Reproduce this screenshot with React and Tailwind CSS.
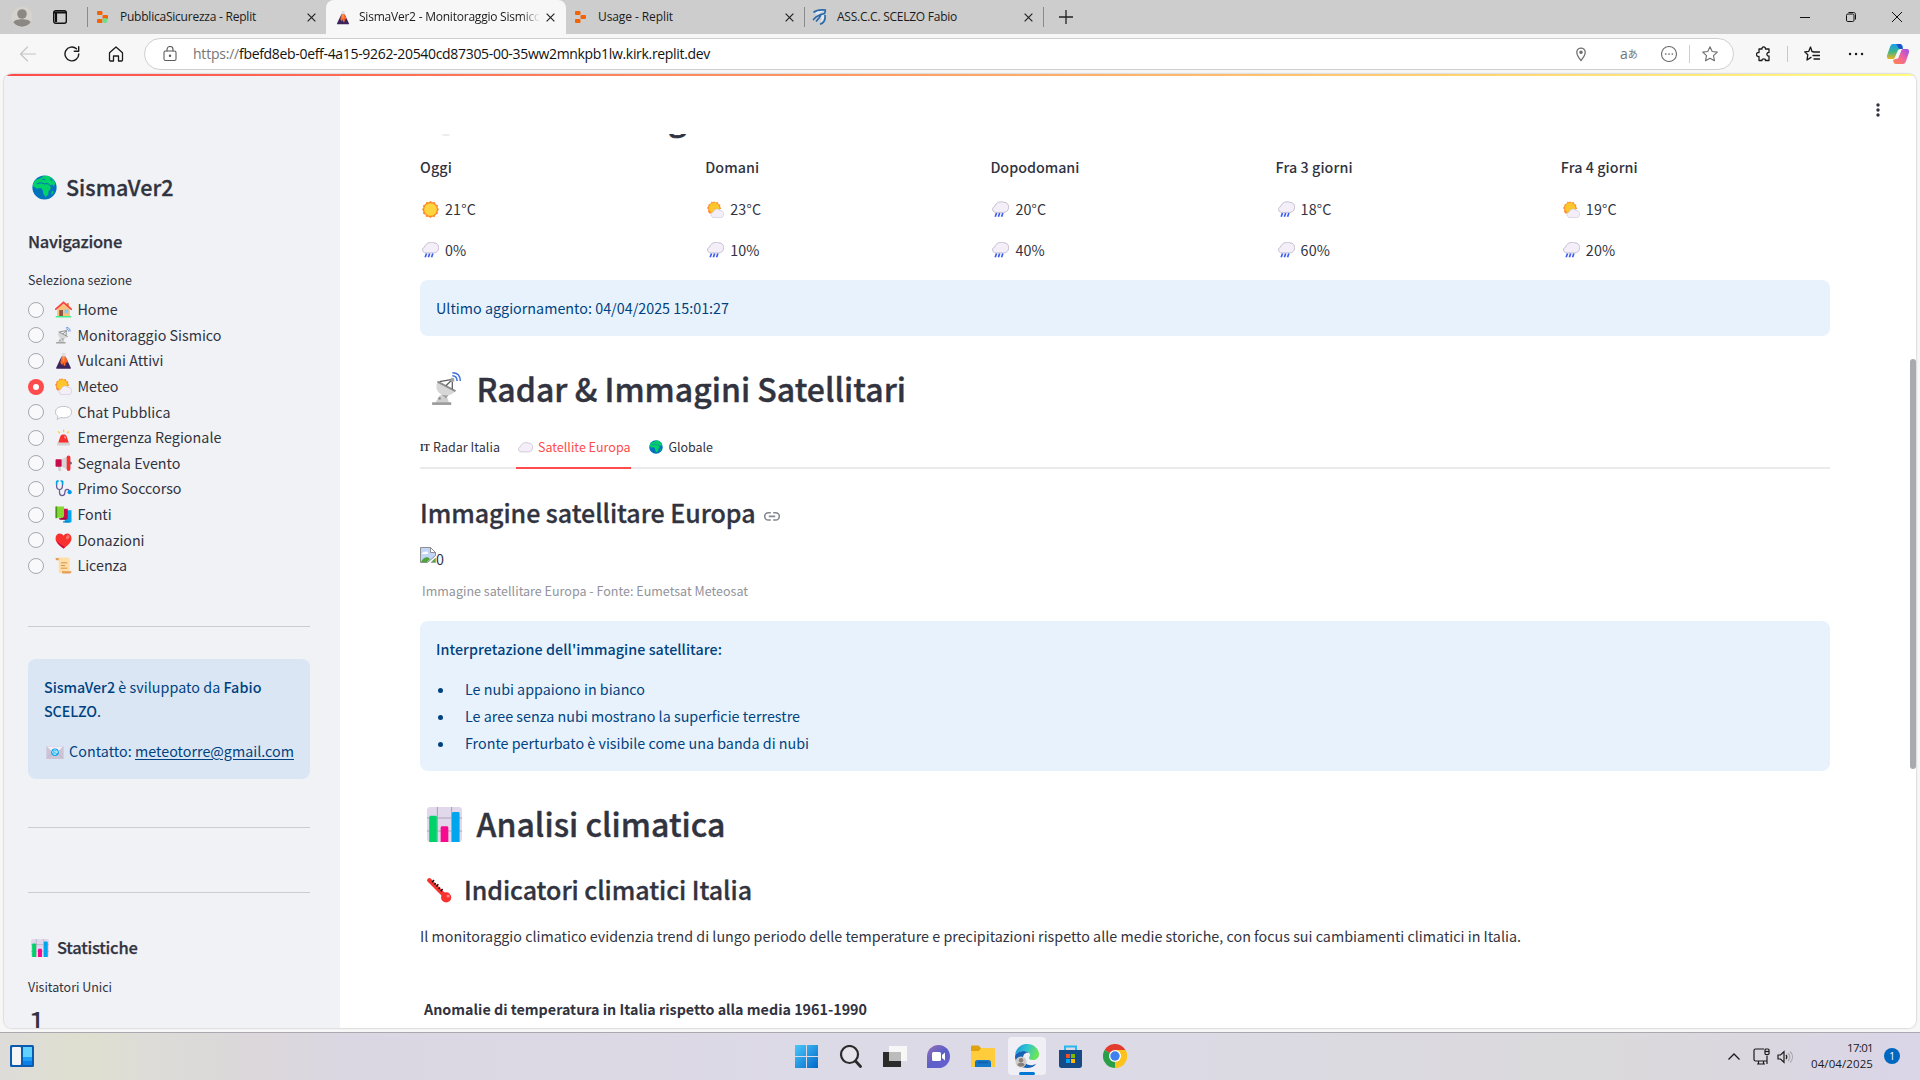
import React, { useLayoutEffect, useRef } from "react";

/* Text set to a given pixel width by spreading the difference over its letters. */
function Fit({ w, className = "", children }) {
  const ref = useRef(null);
  useLayoutEffect(() => {
    const el = ref.current;
    el.style.letterSpacing = "0px";
    const n = el.textContent.length;
    el.style.letterSpacing = (w - el.getBoundingClientRect().width) / n + "px";
  }, [w]);
  return (
    <span ref={ref} className={"inline-block whitespace-pre " + className}>
      {children}
    </span>
  );
}

const sans = "font-['Noto_Sans_CJK_SC',sans-serif]";
const segoe = "font-['Open_Sans','Noto_Sans_CJK_JP',sans-serif]";

/* ---------- emoji ---------- */
const E = ({ className, children, vb = "0 0 32 32" }) => (
  <svg viewBox={vb} className={"shrink-0 " + className}>{children}</svg>
);
const Globe = ({ className }) => (
  <E className={className}>
    <circle cx="16" cy="16" r="15.5" fill="#0074ba" />
    <path d="M5 6C3 8 1.500 11 1 14l3 2 2.500 1.500L9 16.500l3 .5 2 3v3l2 3 1 2 2-1 2-3v-3l3-4-.5-2-2.500-3 3 1 2-1 2 3 1.500-4C29 7 25 2.500 20 1l-6 .5-3 2.500-3 1z" fill="#00d26a" />
    <path d="M6 11.500l4-1.500 4 .5 2 1 3-.5 3 1M13 5.500l4 .5M23 5l3 2" stroke="#0074ba" strokeWidth="1.300" fill="none" />
    <path d="M25.500 21l2-1-1 4-2 1z" fill="#00d26a" />
  </E>
);
const House = ({ className }) => (
  <E className={className}>
    <path d="M22 4h4v8h-4z" fill="#d3883e" />
    <path d="M4 14L16 4l12 10v15H4z" fill="#f8c27c" />
    <path d="M8 17h7v12H8z" fill="#8c5543" />
    <path d="M18 16h7v7h-7z" fill="#83cbff" />
    <path d="M1.5 15.5L16 2.500l14.500 13" stroke="#f8413f" strokeWidth="3.200" fill="none" strokeLinecap="round" />
    <rect x="1" y="28" width="30" height="3" rx="1.5" fill="#44ef8e" />
  </E>
);
const Dish = ({ className }) => (
  <E className={className}>
    <path d="M5 29l4-7 6-1 3 8z" fill="#cfcfcf" />
    <path d="M10 20l3-3 5 4-3 4z" fill="#9b9b9b" />
    <path d="M7 9c-3 7 1 13 8 13 4 0 7-2 9-4z" fill="#d7d7d7" />
    <path d="M7 9l17 9" stroke="#8d8d8d" strokeWidth="1.800" />
    <path d="M9 9l12-2M21 7v9M21 7l-6 6" stroke="#5e5e5e" strokeWidth="1.200" fill="none" />
    <circle cx="21" cy="7.500" r="2" fill="#a3a3a3" />
    <path d="M21 3.500c3 0 4.500 2 4.500 5M21 .8c5 0 7.500 3 7.500 7.700" stroke="#3f72d8" strokeWidth="1.400" fill="none" />
    <path d="M2 28.500h18v2.500H2z" fill="#9b9b9b" />
    <circle cx="9" cy="25" r="1.200" fill="#888" />
  </E>
);
const Volcano = ({ className }) => (
  <E className={className}>
    <path d="M12 5c0-4 6-5 8-2 1 3-1 4-2 5h-5z" fill="#dedede" />
    <path d="M12 9h8l10 21c0 1-1 1.500-2 1.500H4c-1 0-2-.5-2-1.500z" fill="#3b245c" />
    <path d="M12 9h8l4 9-1.500 3-2-3-1 8h-3l-1-6-2 5-2-3-1.500-2z" fill="#ff6723" />
    <path d="M14 9h4l-1 9h-2z" fill="#ff9b5e" />
  </E>
);
const PartSun = ({ className }) => (
  <E className={className}>
    <path d="M13 .5l3 2.200 4-.7 1.500 3.500 3.500 1.500-.5 4 2.500 3-22 10L2 20l.5-4L0 13l2.500-3 .5-4L6.500 5l2-3.500 3 1z" fill="#ff8a2b" />
    <circle cx="13.500" cy="13" r="10" fill="#fcc62c" />
    <path d="M13.500 31.400C6.500 31.400 5.500 21.500 12 20.500 13.500 14.500 21.500 13.500 24 17.500c5 0 7.600 3.500 7.600 6.800 0 3.600-2.500 7.100-6.100 7.100z" fill="#f3eef8" stroke="#cdc4d6" strokeWidth="1.200" />
  </E>
);
const Bubble = ({ className }) => (
  <E className={className}>
    <path d="M16 4.500c9 0 15.300 4.500 15.300 10.800S25 26 16 26c-2 0-3.500-.2-5-.6L4 29l1.500-6C2.500 21 .7 18.500 .7 15.300 .7 9.300 7 4.500 16 4.500z" fill="#fff" stroke="#b5b1ba" strokeWidth="1.500" />
  </E>
);
const Siren = ({ className }) => (
  <E className={className}>
    <path d="M15 1h2.400v5H15zM5 5l2-1.400 3 4-2 1.400zM27 5l-2-1.400-3 4 2 1.400z" fill="#ffce3a" />
    <path d="M10 14c1-5 11-5 12 0l4 12H6z" fill="#f8312f" />
    <path d="M18 12l3 4-1 3-3-3z" fill="#ff9aa0" />
    <rect x="4" y="26" width="24" height="5" rx="1.500" fill="#d3d3d3" />
  </E>
);
const Mega = ({ className }) => (
  <E className={className}>
    <path d="M5 20h5l2 10H7z" fill="#d0d0d0" />
    <path d="M12 8l11-5v24l-11-5z" fill="#d8d5da" />
    <rect x="1" y="8" width="11.500" height="14" rx="1.500" fill="#ca0b4a" />
    <rect x="22" y="1" width="7" height="29" rx="3.500" fill="#f8312f" />
    <path d="M29 12c3 0 3 6 0 6z" fill="#321b41" />
  </E>
);
const Steth = ({ className }) => (
  <E className={className}>
    <path d="M5 3H3v8c0 4 2 7 5.500 7S14 15 14 11V3h-2M8.500 18v6c0 7 10 7 10 0 0-9 9-8 9-1" stroke="#6d5a99" strokeWidth="2.400" fill="none" />
    <path d="M3 2h4M10.500 2h4M14.500 2v7M3 2v7" stroke="#00a6ed" strokeWidth="2.600" fill="none" />
    <circle cx="27.500" cy="23" r="4" fill="#0098ee" />
  </E>
);
const Books = ({ className }) => (
  <E className={className}>
    <path d="M20 8h11v20c0 2-1 3-2 3H18z" fill="#00a6ed" />
    <path d="M15 29h12v2H15z" fill="#0074ba" />
    <path d="M13 5h11v20H11z" fill="#ca0b4a" />
    <path d="M7 23h14v3H9z" fill="#990838" />
    <path d="M1 1h16v18l-2 3H1z" fill="#86d72f" />
    <path d="M1 1h3v22H1z" fill="#44911b" />
  </E>
);
const Heart = ({ className }) => (
  <E className={className}>
    <path d="M16 7C12 .5 1 1.500 1 12c0 9 10 15 15 19 5-4 15-10 15-19C31 1.500 20 .5 16 7z" fill="#f8312f" />
    <path d="M3 17c3 7 9 10.500 13 14l3-2.500C12 25 6 20 3 17z" fill="#ca0b4a" />
    <ellipse cx="24" cy="9.500" rx="3" ry="4.300" transform="rotate(35 24 9.500)" fill="#f37366" />
  </E>
);
const Scroll = ({ className }) => (
  <E className={className}>
    <path d="M5 1h19c2 0 3.500 1.500 3.500 3.500V27c0 2-1 3-3 3H9c-2 0-2-1-2-3V6z" fill="#ffdea7" />
    <path d="M1 2h6v4H3C1.500 6 1 4 1 2zM13 27h18c0 3-1.500 4-4 4H15c-2 0-2-2-2-4z" fill="#e39d55" />
    <path d="M11 11h12M11 16h8M11 21h12" stroke="#d3883e" strokeWidth="1.700" />
  </E>
);
const Mail = ({ className }) => (
  <E className={className} vb="0 0 32 24">
    <rect x="0" y="0" width="32" height="24" rx="1.500" fill="#cdc4d6" />
    <path d="M1 1h30L16 15z" fill="#f3eef8" />
    <path d="M1 23l11-11M31 23L20 12" stroke="#b4a8c3" />
    <circle cx="16" cy="11.500" r="7" fill="#00a6ed" />
    <circle cx="16" cy="11.500" r="2.200" fill="none" stroke="#fff" strokeWidth="1.300" />
    <path d="M18.300 9v3c0 2 2 2 2.200-.5.2-6-9-6-9 0 0 4 4 5.500 7 3.500" fill="none" stroke="#fff" strokeWidth="1.200" />
  </E>
);
const Chart = ({ className }) => (
  <E className={className}>
    <rect x="0" y="0" width="32" height="32" rx="3" fill="#e1d8ec" />
    <path d="M9.500 0v32M22.500 0v32M0 10h32M0 22h32" stroke="#aba3b5" strokeWidth="1" />
    <path d="M2 9.500C2 8.500 2.500 8 3.500 8h4C8.500 8 9 8.500 9 9.500V32H2z" fill="#00d26a" />
    <path d="M12.500 19c0-1 .5-1.500 1.500-1.500h4c1 0 1.500.5 1.500 1.500v13h-7z" fill="#f70a8d" />
    <path d="M22.800 6c0-1 .5-1.500 1.500-1.500h4c1 0 1.500.5 1.500 1.500v26h-7z" fill="#00a6ed" />
  </E>
);
const Thermo = ({ className }) => (
  <E className={className}>
    <path d="M3 3l19 19" stroke="#f8312f" strokeWidth="5.500" strokeLinecap="round" />
    <circle cx="24.500" cy="24.800" r="6.500" fill="#f8312f" />
    <circle cx="27" cy="23" r="2" fill="#ff8687" />
    <path d="M6.500 5.500l2.500-3M12 11l2.500-3M17.500 17l2.500-3M9.500 8.500l1.500-2M15 14l1.500-2" stroke="#111" strokeWidth="1.900" />
  </E>
);
const Sun = ({ className }) => (
  <E className={className}>
    <path d="M16 0l3.500 2.500L24 2l1.500 4L30 8l-.5 4.500L32 16l-2.500 3.500L30 24l-4.500 2-1.500 4-4.500-.5L16 32l-3.500-2.500L8 30l-1.500-4L2 24l.5-4.500L0 16l2.500-3.500L2 8l4.500-2L8 2l4.500.5z" fill="#ff8a2b" />
    <circle cx="16" cy="16" r="11.800" fill="#fcd53f" />
  </E>
);
const cloudPath = "M8 20.500C-.5 20.500-1 11 5 9.500 6.500 2 17-1.500 22.500 1.500c6 0 8.800 4 8.800 9 0 6-3.800 10-9.300 10z";
const Rain = ({ className }) => (
  <E className={className} vb="0 0 32 30">
    <path d={cloudPath} fill="#f3eef8" stroke="#bdb4c8" strokeWidth="1.500" />
    <path d="M8.500 21.500l-2.500 7M14.500 21.500l-2.500 7M20.500 21.500l-2.500 7" stroke="#3f5ff0" strokeWidth="3.200" />
  </E>
);
const Cloud = ({ className }) => (
  <E className={className} vb="0 0 32 22">
    <path d={cloudPath} fill="#f3eef8" stroke="#c3bacd" strokeWidth="1.500" />
  </E>
);

/* ---------- browser ---------- */
const Replit = ({ green }) => (
  <E className="h-[12px] w-[11px]" vb="0 0 11 12">
    <rect x="0" y="0" width="5.500" height="4" rx="1" fill="#f26207" />
    <rect x="5.500" y="4" width="5.500" height="4" rx="1" fill="#f26207" />
    <rect x="0" y="8" width="5.500" height="4" rx="1" fill="#f26207" />
    {green && <circle cx="8" cy="9.500" r="2.500" fill="#6ee08c" />}
  </E>
);
const Close = ({ className = "" }) => (
  <svg viewBox="0 0 10 10" className={"h-[9px] w-[9px] shrink-0 " + className}>
    <path d="M.7.7l8.600 8.600M9.300.7L.7 9.300" stroke="#222" strokeWidth="1.300" />
  </svg>
);
const Ico = ({ className = "", c = "#1b1b1b", children }) => (
  <svg viewBox="0 0 16 16" className={"h-4 w-4 shrink-0 " + className} fill="none" stroke={c} strokeWidth="1.100" strokeLinecap="round" strokeLinejoin="round">
    {children}
  </svg>
);

function TabBar() {
  return (
    <div className={"flex h-[34px] items-center bg-[#cdcdcd] text-[12px] text-[#1b1b1b] " + segoe}>
      <svg viewBox="0 0 22 22" className="ml-[11px] h-[22px] w-[22px]">
        <circle cx="11" cy="11" r="10.500" fill="#d6d2cd" />
        <circle cx="11" cy="8" r="4.800" fill="#8b8783" />
        <path d="M2.500 16.500c0-4.500 17-4.500 17 0-4 5.500-13 5.500-17 0z" fill="#8b8783" />
      </svg>
      <svg viewBox="0 0 14 14" className="ml-[20px] h-[14px] w-[14px]">
        <rect x=".7" y=".7" width="12.600" height="12.600" rx="2" fill="none" stroke="#111" strokeWidth="1.400" />
        <path d="M1 2.500h12M3 2v10" stroke="#111" strokeWidth="2.200" />
      </svg>
      <div className="ml-[20px] h-5 w-px bg-[#8a8a8a]" />
      <div className="ml-[9px] flex w-[229px] items-center">
        <Replit green />
        <Fit w={136} className="ml-[12px]">PubblicaSicurezza - Replit</Fit>
        <Close className="ml-[51px]" />
      </div>
      <div className="flex h-[34px] w-[240px] items-center rounded-t-[8px] bg-[#f7f7f7]">
        <Volcano className="ml-[10px] h-[15px] w-[14px]" />
        <div className="ml-[9px] w-[180px] [mask-image:linear-gradient(to_right,black_162px,transparent_181px)]">
          <Fit w={182}>SismaVer2 - Monitoraggio Sismico</Fit>
        </div>
        <Close className="ml-[7px]" />
      </div>
      <div className="flex w-[238px] items-center">
        <div className="ml-[9px]"><Replit /></div>
        <Fit w={75} className="ml-[12px]">Usage - Replit</Fit>
        <Close className="ml-[112px]" />
      </div>
      <div className="h-5 w-px bg-[#8a8a8a]" />
      <div className="flex w-[238px] items-center">
        <svg viewBox="0 0 15 16" className="ml-[7px] h-4 w-[15px]">
          <path d="M1 4C4 0 10 0 14 1L8 4l5 3-2 7-3 2 2-7-5-1-4 3 4-6z" fill="#dfe7ef" />
          <path d="M1.500 3.500C5 .5 10 .6 14 1.200M13.500 1.500l-1 3-4 1L4 8 1 11M13 6c.5 4-1 8-5 9.200M9 6L7 9l-3 3.500" stroke="#2d68a8" strokeWidth="1.700" fill="none" />
        </svg>
        <Fit w={120} className="ml-[10px]">ASS.C.C. SCELZO Fabio</Fit>
        <Close className="ml-[67px]" />
      </div>
      <div className="h-5 w-px bg-[#8a8a8a]" />
      <svg viewBox="0 0 14 14" className="ml-[15px] h-[14px] w-[14px]"><path d="M7 0v14M0 7h14" stroke="#222" strokeWidth="1.300" /></svg>
      <div className="ml-auto flex items-center gap-[36px] pr-[18px]">
        <svg viewBox="0 0 10 10" className="h-[10px] w-[10px]"><path d="M0 5.500h10" stroke="#111" /></svg>
        <svg viewBox="0 0 10 10" className="h-[10px] w-[10px]"><rect x=".5" y="2" width="7.500" height="7.500" rx="1.300" fill="none" stroke="#111" /><path d="M2.500.5h5c1.300 0 2 .7 2 2v5" fill="none" stroke="#111" /></svg>
        <svg viewBox="0 0 10 10" className="h-[10px] w-[10px]"><path d="M0 0l10 10M10 0L0 10" stroke="#111" /></svg>
      </div>
    </div>
  );
}

function Toolbar() {
  return (
    <div className={"flex h-[40px] items-center bg-[#f7f7f7] pb-px text-[14px] " + segoe}>
      <Ico c="#c4c4c4" className="ml-[20px]"><path d="M.5 8h15M7.500 1L.5 8l7 7" /></Ico>
      <Ico className="ml-[28px]"><path d="M14.800 8A6.900 6.900 0 1 1 12.500 2.800M14.700.8v4.400h-4.400" strokeWidth="1.400" /></Ico>
      <Ico className="ml-[28px]"><path d="M1.500 6.800L8 1l6.500 5.800V14c0 .7-.3 1-1 1h-3v-5h-5v5h-3c-.7 0-1-.3-1-1z" strokeWidth="1.300" /></Ico>
      <div className="ml-[20px] flex h-[32px] w-[1590px] items-center rounded-full border border-[#cfcfcf] bg-white">
        <Ico c="#5c5c5c" className="ml-[17px]"><rect x="2" y="5" width="12" height="9.500" rx="1.500" /><path d="M5 5V3.500a3 3 0 0 1 6 0V5" /><circle cx="8" cy="9.700" r=".7" fill="#5c5c5c" /></Ico>
        <Fit w={46} className="ml-[15px] text-[#767676]">https://</Fit>
        <Fit w={471} className="text-[#111]">fbefd8eb-0eff-4a15-9262-20540cd87305-00-35ww2mnkpb1lw.kirk.replit.dev</Fit>
        <div className="ml-auto flex items-center">
          <Ico c="#707070"><path d="M8 14.500C5 11 3.800 9 3.800 6.300a4.200 4.200 0 0 1 8.400 0C12.200 9 11 11 8 14.500z" strokeWidth="1.300" /><circle cx="8" cy="6.300" r="1.200" fill="#707070" /></Ico>
          <span className="ml-[31px] flex w-[19px] items-center text-[#757575]"><span className="text-[14px] leading-none">a</span><span className="text-[10px] leading-none">あ</span></span>
          <Ico c="#707070" className="ml-[22px]"><circle cx="8" cy="8" r="7.500" /><path d="M4.700 8h.1M8 8h.1M11.300 8h.1" strokeWidth="1.700" /></Ico>
          <div className="ml-[12px] h-[18px] w-px bg-[#cfcfcf]" />
          <Ico c="#707070" className="ml-[12px] mr-[15px]"><path d="M8 .8l2.200 4.700 5.100.6-3.800 3.500 1 5.200L8 12.200l-4.500 2.600 1-5.200L.7 6.100l5.100-.6z" /></Ico>
        </div>
      </div>
      <Ico className="ml-[22px]"><path d="M3 3h3c-.6-2.800 4-2.800 3.400 0H13v3.500c-2.800-.4-2.800 4 0 3.500V14.500H9.400c.6-2.300-3.800-2.300-3.400 0H3V10.500c-3.400.6-3.400-4.500 0-4z" strokeWidth="1.300" /></Ico>
      <div className="ml-[15px] h-[16px] w-px bg-[#c9c9c9]" />
      <Ico className="ml-[16px]"><path d="M10 6L8 5.500 6.500 1 4.800 5.300.7 5.800l3.100 3L3 14l4-2.600M10 6h5.500M9 9.500h6.500M10 13h5.500" strokeWidth="1.300" /></Ico>
      <Ico className="ml-[28px]"><path d="M2 8h.1M8 8h.1M14 8h.1" strokeWidth="2.400" /></Ico>
      <svg viewBox="0 0 22 20" className="ml-[23px] h-[20px] w-[22px]">
        <defs>
          <linearGradient id="cpA" x1="0" y1="0" x2="0" y2="1"><stop offset="0" stopColor="#18a0ef" /><stop offset=".5" stopColor="#3bb48c" /><stop offset="1" stopColor="#f0b41c" /></linearGradient>
          <linearGradient id="cpB" x1="1" y1="0" x2="0" y2="1"><stop offset="0" stopColor="#9b4cf0" /><stop offset=".5" stopColor="#f2649a" /><stop offset="1" stopColor="#ff8a4a" /></linearGradient>
        </defs>
        <path d="M6 0h7c2 0 2.500 1.500 3 3.500L11 6l-3 7c-.5 1.500-1 2-3 2H2C0 15-.3 13 .2 11L3 3C3.700 1 4.500 0 6 0z" fill="url(#cpA)" />
        <path d="M12 0c3 0 3 2 4 5h-3c-2 0-2-4-4-5z" fill="#1e50d0" />
        <path d="M16 20H9c-2 0-2.500-1.500-3-4l5-2 3-7c.5-1.500 1-2 3-2h3c2 0 2.300 2 1.800 4L19 17c-.7 2-1.500 3-3 3z" fill="url(#cpB)" />
        <path d="M12.500 5.500h2L11 14.500H8.500z" fill="#f7f7f7" />
      </svg>
    </div>
  );
}

/* ---------- sidebar ---------- */
const nav = [
  [House, "Home", 40], [Dish, "Monitoraggio Sismico", 144], [Volcano, "Vulcani Attivi", 86], [PartSun, "Meteo", 41],
  [Bubble, "Chat Pubblica", 93], [Siren, "Emergenza Regionale", 144], [Mega, "Segnala Evento", 103],
  [Steth, "Primo Soccorso", 104], [Books, "Fonti", 34], [Heart, "Donazioni", 67], [Scroll, "Licenza", 49.5],
];

function Sidebar() {
  return (
    <aside className="flex w-[336px] shrink-0 flex-col overflow-hidden bg-[#f0f2f6] pl-[24px]">
      <div className="mt-[91px] flex h-[40px] items-center">
        <Globe className="ml-[4px] mt-px h-[25px] w-[25px]" />
        <Fit w={107.500} className="ml-[9px] text-[21.500px] font-medium leading-[40px] [-webkit-text-stroke:0.3px]">SismaVer2</Fit>
      </div>
      <Fit w={94} className="mt-[18px] self-start text-[16.500px] font-medium leading-[32px] [-webkit-text-stroke:0.25px]">Navigazione</Fit>
      <Fit w={104} className="mt-[13px] self-start text-[12.500px] leading-[20px]">Seleziona sezione</Fit>
      <ul className="mt-[7px]">
        {nav.map(([Icon, label, w]) => (
          <li key={label} className="flex h-[25.600px] items-center">
            {label === "Meteo" ? (
              <span className="flex h-4 w-4 items-center justify-center rounded-full bg-[#ff4b4b]"><span className="h-[6px] w-[6px] rounded-full bg-white" /></span>
            ) : (
              <span className="h-4 w-4 rounded-full border border-[#a6a8b0] bg-[#f9f9fb]" />
            )}
            <Icon className="ml-[10.500px] h-[17px] w-[17px]" />
            <Fit w={w} className="ml-[6px] -mt-px text-[14.300px] leading-[24px]">{label}</Fit>
          </li>
        ))}
      </ul>
      <div className="mt-[47px] h-px w-[282px] shrink-0 bg-[#cbccd2]" />
      <div className="mt-[32px] h-[120px] w-[282px] shrink-0 rounded-[8px] bg-[#dae6f4] pl-[16px] pt-[16px] text-[14.300px] leading-[24px] text-[#004280]">
        <div className="flex"><Fit w={71} className="font-medium">SismaVer2</Fit><Fit w={108.500}>{" è sviluppato da "}</Fit><Fit w={38} className="font-medium">Fabio</Fit></div>
        <div className="flex"><Fit w={53} className="font-medium">SCELZO</Fit>.</div>
        <div className="mt-[16px] flex items-center">
          <Mail className="ml-[2px] mt-[3px] h-[13px] w-[18px]" />
          <Fit w={66} className="ml-[5px]">{"Contatto: "}</Fit>
          <Fit w={159} className="underline underline-offset-2">meteotorre@gmail.com</Fit>
        </div>
      </div>
      <div className="mt-[48px] h-px w-[282px] shrink-0 bg-[#cbccd2]" />
      <div className="mt-[64px] h-px w-[282px] shrink-0 bg-[#cbccd2]" />
      <div className="mt-[38px] flex h-[32px] shrink-0 items-center">
        <Chart className="ml-[3px] mt-[3px] h-[18px] w-[18px]" />
        <Fit w={80.500} className="ml-[8px] text-[16.500px] font-medium leading-[32px] [-webkit-text-stroke:0.25px]">Statistiche</Fit>
      </div>
      <Fit w={84} className="mt-[14px] self-start text-[12.500px] leading-[20px]">Visitatori Unici</Fit>
      <span className="mt-[3px] text-[32px] leading-[42px]">1</span>
    </aside>
  );
}

/* ---------- main ---------- */
const days = [
  ["Oggi", 32, Sun, "21°C", "0%"], ["Domani", 54, PartSun, "23°C", "10%"], ["Dopodomani", 89, Rain, "20°C", "40%"],
  ["Fra 3 giorni", 77, Rain, "18°C", "60%"], ["Fra 4 giorni", 77, PartSun, "19°C", "20%"],
];

function Main() {
  return (
    <main className="flex min-w-0 flex-1 flex-col overflow-hidden bg-white">
      <div className="flex h-[58px] shrink-0 justify-end">
        <svg viewBox="0 0 4 14" className="mr-[30px] mt-[27px] h-[14px] w-[4px]" fill="#31333f"><circle cx="2" cy="2" r="1.700" /><circle cx="2" cy="7" r="1.700" /><circle cx="2" cy="12" r="1.700" /></svg>
      </div>
      <div className="flex w-[1490px] flex-col pl-[80px]">
        <div className="flex h-[21px] items-start overflow-hidden">
          <div className="ml-[22px] h-[2px] w-[8px] rounded-b-full bg-[#ececef]" />
          <div className="relative ml-[218px] h-full w-[20px] overflow-hidden">
            <span className="absolute -top-[35px] left-0 text-[32px] font-medium leading-[36px] [-webkit-text-stroke:0.7px]">g</span>
          </div>
        </div>
        <div className="grid grid-cols-5 gap-x-4 text-[14.300px] leading-[24px]">
          {days.map(([d, w, Icon, t, p]) => (
            <div key={d} className="h-[125px]">
              <Fit w={w} className="block w-fit font-medium">{d}</Fit>
              <div className="mt-[18px] flex items-center">
                <Icon className="ml-[2px] h-[17px] w-[17px]" /><Fit w={31} className="ml-[6px]">{t}</Fit>
              </div>
              <div className="mt-[17px] flex items-center">
                <Rain className="ml-[2px] h-[16px] w-[17px]" /><Fit w={p === "0%" ? 21 : 29.500} className="ml-[6px]">{p}</Fit>
              </div>
            </div>
          ))}
        </div>
        <div className="h-[56px] rounded-[8px] bg-[#e8f2fc] pl-[16px] text-[14.300px] leading-[56px] text-[#004280]">
          <Fit w={293}>Ultimo aggiornamento: 04/04/2025 15:01:27</Fit>
        </div>
        <h2 className="mt-[28px] flex h-[48px] items-center">
          <Dish className="ml-[10px] mt-[2px] h-[38px] w-[34px]" />
          <Fit w={429.500} className="ml-[12.500px] text-[32px] font-medium leading-[48px] [-webkit-text-stroke:0.4px]">Radar &amp; Immagini Satellitari</Fit>
        </h2>
        <div className="mt-[15px] flex h-[42px] gap-4 border-b-2 border-[#eaeaec] text-[12.500px] leading-[40px]">
          <div className="flex h-[40px] w-[80px] items-center"><Fit w={10} className="mt-px font-['Noto_Serif','Liberation_Serif',serif] text-[9px] font-bold">IT</Fit><Fit w={67} className="ml-[3px]">Radar Italia</Fit></div>
          <div className="flex h-[42px] w-[115px] items-center border-b-2 border-[#ff4b4b] text-[#ff4b4b]"><Cloud className="ml-[2px] h-[11px] w-[15px]" /><Fit w={92.500} className="ml-[5px]">Satellite Europa</Fit></div>
          <div className="flex h-[40px] items-center"><Globe className="ml-[2px] h-[14px] w-[14px]" /><Fit w={44.500} className="ml-[5.500px]">Globale</Fit></div>
        </div>
        <h3 className="mt-[23px] flex h-[40px] items-center">
          <Fit w={335.500} className="text-[25px] font-medium leading-[40px] [-webkit-text-stroke:0.3px]">Immagine satellitare Europa</Fit>
          <svg viewBox="0 0 16 9" className="ml-[8.500px] mt-[8px] h-[9px] w-[16px]" fill="none" stroke="#85868f" strokeWidth="1.600"><path d="M6.800.8H4.300a3.600 3.600 0 0 0 0 7.200h2.500M9.200.8h2.500a3.600 3.600 0 0 1 0 7.200H9.200M4.800 4.400h6.400" /></svg>
        </h3>
        <div className="mt-[15px] flex h-[24px] items-start">
          <svg viewBox="0 0 16 16" className="h-4 w-4">
            <path d="M.5.500h10l5 5v3l-8 7h-7z" fill="#c3d6f7" stroke="#8f8f8f" />
            <path d="M10.500.5v5h5z" fill="#fff" stroke="#8f8f8f" />
            <path d="M2 7c0-1.500 1.500-2 2.500-1.500C5 4 8 4 8 6.500v.5z" fill="#fff" />
            <path d="M1 15c2-5 7-6 9-3l-3 3z" fill="#4da63c" />
            <path d="M15.500 11v4.500H11z" fill="#4da63c" stroke="#8f8f8f" strokeWidth=".5" />
          </svg>
          <span className="text-[14.300px] leading-[24px]">0</span>
        </div>
        <Fit w={326} className="ml-[2px] mt-[10px] self-start text-[12.500px] leading-[19px] text-[#92939b]">Immagine satellitare Europa - Fonte: Eumetsat Meteosat</Fit>
        <div className="mt-[21px] h-[150px] rounded-[8px] bg-[#e8f2fc] pl-[16px] pt-[16px] text-[14.300px] leading-[24px] text-[#004280]">
          <Fit w={286} className="block w-fit font-medium">Interpretazione dell'immagine satellitare:</Fit>
          <ul className="mt-[14px] flex flex-col">
            {[["Le nubi appaiono in bianco", 180], ["Le aree senza nubi mostrano la superficie terrestre", 335], ["Fronte perturbato è visibile come una banda di nubi", 344]].map(([t, w]) => (
              <li key={t} className="flex h-[27px] items-center">
                <span className="ml-[2px] mt-[3px] h-[5px] w-[5px] rounded-full bg-[#004280]" />
                <Fit w={w} className="ml-[22px]">{t}</Fit>
              </li>
            ))}
          </ul>
        </div>
        <h2 className="mt-[28px] flex h-[48px] items-center">
          <Chart className="ml-[7px] mt-[3px] h-[35px] w-[35px]" />
          <Fit w={249} className="ml-[14.500px] text-[32px] font-medium leading-[48px] [-webkit-text-stroke:0.4px]">Analisi climatica</Fit>
        </h2>
        <h3 className="mt-[22px] flex h-[40px] items-center">
          <Thermo className="ml-[7px] mt-[3px] h-[25px] w-[25px]" />
          <Fit w={288} className="ml-[12px] text-[25px] font-medium leading-[40px] [-webkit-text-stroke:0.3px]">Indicatori climatici Italia</Fit>
        </h3>
        <Fit w={1101} className="mt-[15px] self-start text-[14.300px] leading-[24px]">Il monitoraggio climatico evidenzia trend di lungo periodo delle temperature e precipitazioni rispetto alle medie storiche, con focus sui cambiamenti climatici in Italia.</Fit>
        <Fit w={443} className="ml-[4px] mt-[49px] self-start text-[14.300px] font-bold leading-[24px]">Anomalie di temperatura in Italia rispetto alla media 1961-1990</Fit>
      </div>
    </main>
  );
}

/* ---------- taskbar ---------- */
function Taskbar() {
  return (
    <div className={"flex h-[48px] items-center border-t border-[#aba8b0] bg-[linear-gradient(90deg,#dddcd9_0px,#dedfcf_85px,#dddcd8_150px,#dbd7da_250px,#dbd7e2_340px,#dcdae6_800px,#dcdae6_1100px,#dad9db_1600px,#dbd7df_1750px,#dad5e8_1920px)] text-[#1b1b1b] " + segoe}>
      <svg viewBox="0 0 24 22" className="-mt-px ml-[10px] h-[22px] w-[24px]">
        <rect width="24" height="22" rx="1.500" fill="#0a5bb0" />
        <rect x="2" y="2" width="9" height="18" rx="1" fill="#f5f5f5" />
        <path d="M13 2h9v10h-9z" fill="#60d2fb" /><path d="M13 12h9v4h-9z" fill="#1e9df5" /><path d="M13 16h9v4h-9z" fill="#0b7fe8" />
      </svg>
      <div className="-mt-px ml-[761px] flex items-center gap-[21px]">
        <svg viewBox="0 0 23 23" className="h-[23px] w-[23px]">
          <defs><linearGradient id="win" x1="0" y1="0" x2="1" y2="1"><stop offset="0" stopColor="#4cc8fb" /><stop offset="1" stopColor="#0067c8" /></linearGradient></defs>
          <path d="M0 0h11v11H0zM12 0h11v11H12zM0 12h11v11H0zM12 12h11v11H12z" fill="url(#win)" />
        </svg>
        <svg viewBox="0 0 23 23" className="h-[23px] w-[23px]" fill="none" stroke="#2b2b2b"><circle cx="10.500" cy="9.500" r="8.500" fill="#e6e4ea" strokeWidth="2.200" /><path d="M16.500 16l5 5.500" strokeWidth="2.800" strokeLinecap="round" /></svg>
        <svg viewBox="0 0 24 23" className="h-[23px] w-[24px]"><path d="M0 7h18v15H0z" fill="#2b2b2b" /><path d="M6 1h18v15H6z" fill="#fafafa" fillOpacity=".9" /><path d="M6 7h12v9H6z" fill="#bcbcbc" /></svg>
        <svg viewBox="0 0 23 23" className="-ml-px h-[23px] w-[23px]">
          <defs><linearGradient id="chat" x1="0" y1="0" x2="1" y2="1"><stop offset="0" stopColor="#9a6fb4" /><stop offset=".5" stopColor="#5b5fc7" /><stop offset="1" stopColor="#6a5fd8" /></linearGradient></defs>
          <path d="M0 23V11.500A11.500 11.500 0 1 1 11.500 23z" fill="url(#chat)" /><rect x="5" y="7" width="9" height="9" rx="1.500" fill="#fff" /><path d="M15 10l3-2.500v8L15 13z" fill="#fff" />
        </svg>
        <svg viewBox="0 0 24 23" className="h-[23px] w-[24px]">
          <path d="M0 2c0-1 .5-1.500 1.500-1.500h6L10 3v4H0z" fill="#e0a10f" /><path d="M0 6h8l2-3h12.500c1 0 1.500.5 1.500 1.500V22H0z" fill="#ffcc3c" /><path d="M4 22v-4.500c0-1.500.8-2.500 2.500-2.500h11c1.700 0 2.500 1 2.500 2.500V22z" fill="#1476c6" /><path d="M7 17.500h10" stroke="#0b5fa5" strokeWidth="1.500" />
        </svg>
        <div className="-ml-[8px] flex h-[38px] w-[38px] flex-col items-center rounded-[4px] bg-[#f0eff6]">
          <svg viewBox="0 0 24 24" className="mt-[7px] h-[24px] w-[24px]">
            <defs>
              <linearGradient id="edA" x1="0" y1="0" x2="1" y2=".3"><stop offset="0" stopColor="#1b8fd8" /><stop offset=".5" stopColor="#2cc3d5" /><stop offset="1" stopColor="#6be45a" /></linearGradient>
            </defs>
            <path d="M0 11C1 4 6 0 12 0c7 0 12 5 12 10 0 4-3 6-6 6-3 0-4-1-4-2 0-1 1-1.500 1-3 0-2-2.500-4-6-4-4 0-7 2-9 4z" fill="url(#edA)" />
            <path d="M0 12c1-3 5-5 9-5 2 0 4 .7 5 2-4-1-6 2-6 5 0 5 5 8 10 7 1-.2 2-.5 3.500-1.500C19.500 22.500 16 24 12 24 5 24 0 19 0 12z" fill="#1463b4" />
            <circle cx="6" cy="18" r="5.500" fill="#cfcac6" /><circle cx="6" cy="16.300" r="2.200" fill="#85807c" /><path d="M2.500 21c0-3 7-3 7 0-2 2.300-5 2.300-7 0z" fill="#85807c" />
          </svg>
          <div className="mt-[4px] h-[3px] w-[16px] rounded-full bg-[#0078d4]" />
        </div>
        <svg viewBox="0 0 23 23" className="-ml-[8px] h-[23px] w-[23px]">
          <path d="M6 5V1.500h11V5" fill="none" stroke="#27b8ef" strokeWidth="2" /><path d="M0 5h23v15.500c0 1.500-1 2.500-2.500 2.500h-18C1 23 0 22 0 20.500z" fill="#144b87" />
          <path d="M7 9h4v4H7z" fill="#f25022" /><path d="M12 9h4v4h-4z" fill="#7fba00" /><path d="M7 14h4v4H7z" fill="#00a4ef" /><path d="M12 14h4v4h-4z" fill="#ffb900" />
        </svg>
        <svg viewBox="0 0 24 24" className="h-[24px] w-[24px]">
          <path d="M12 12L1.600 6A12 12 0 0 1 22.400 6z" fill="#e33b2e" /><path d="M12 12L22.400 6A12 12 0 0 1 12 24z" fill="#fcc31e" /><path d="M12 12l0 12A12 12 0 0 1 1.600 6z" fill="#2a9f48" />
          <path d="M12 6h10.400A12 12 0 0 1 12 24l5.500-9z" fill="#fcc31e" /><circle cx="12" cy="12" r="6" fill="#fff" /><circle cx="12" cy="12" r="4.700" fill="#3f7fee" />
        </svg>
      </div>
      <div className="ml-auto flex items-center">
        <svg viewBox="0 0 12 7" className="h-[7px] w-[12px]"><path d="M.5 6.500L6 1l5.500 5.500" stroke="#1b1b1b" strokeWidth="1.300" fill="none" /></svg>
        <svg viewBox="0 0 17 17" className="ml-[13px] h-[17px] w-[17px]" fill="none" stroke="#1b1b1b" strokeWidth="1.200"><path d="M11 1H2.500C1.500 1 1 1.500 1 2.500v9c0 1 .5 1.500 1.500 1.500H14M5.500 13v3M10.500 13v3M4 16h8M14 7.500V16" /><rect x="12" y="1" width="4" height="5.500" rx="1" /><path d="M12 3.500h4" /></svg>
        <svg viewBox="0 0 17 14" className="ml-[7px] h-[14px] w-[17px]" fill="none" stroke="#1b1b1b" strokeWidth="1.200"><path d="M1 5v4h2.500L7 12.300V1.700L3.500 5z" /><path d="M9 5c1 1.200 1 2.800 0 4" /><path d="M11 3c2 2.400 2 5.600 0 8M13.200 1.500c3 3.300 3 7.700 0 11" stroke="#aaa7ae" /></svg>
        <div className="-mt-[2px] ml-[17px] flex w-[62px] flex-col items-end text-[11.500px] leading-[16px]"><Fit w={26}>17:01</Fit><Fit w={62}>04/04/2025</Fit></div>
        <div className="ml-[11px] mr-[20px] flex h-4 w-4 -translate-y-px items-center justify-center rounded-full bg-[#0067c0] text-[10px] leading-none text-white">1</div>
      </div>
    </div>
  );
}

export default function App() {
  return (
    <div className={"flex h-[1080px] w-[1920px] flex-col overflow-hidden bg-[#f7f7f7] text-[#31333f] " + sans}>
      <TabBar />
      <Toolbar />
      <div className="mb-[4px] ml-[4px] mr-[4px] flex h-[954px] flex-col overflow-hidden rounded-[8px] bg-white shadow-[0_0_2px_rgba(0,0,0,0.35)]">
        <div className="h-[2px] shrink-0 bg-[linear-gradient(90deg,#ff4b4b,#fffd80)]" />
        <div className="flex min-h-0 flex-1">
          <Sidebar />
          <Main />
          <div className="w-[6px] shrink-0 bg-white pt-[283px]"><div className="h-[410px] w-[6px] rounded-full bg-[#a9aab0]" /></div>
        </div>
      </div>
      <Taskbar />
    </div>
  );
}
